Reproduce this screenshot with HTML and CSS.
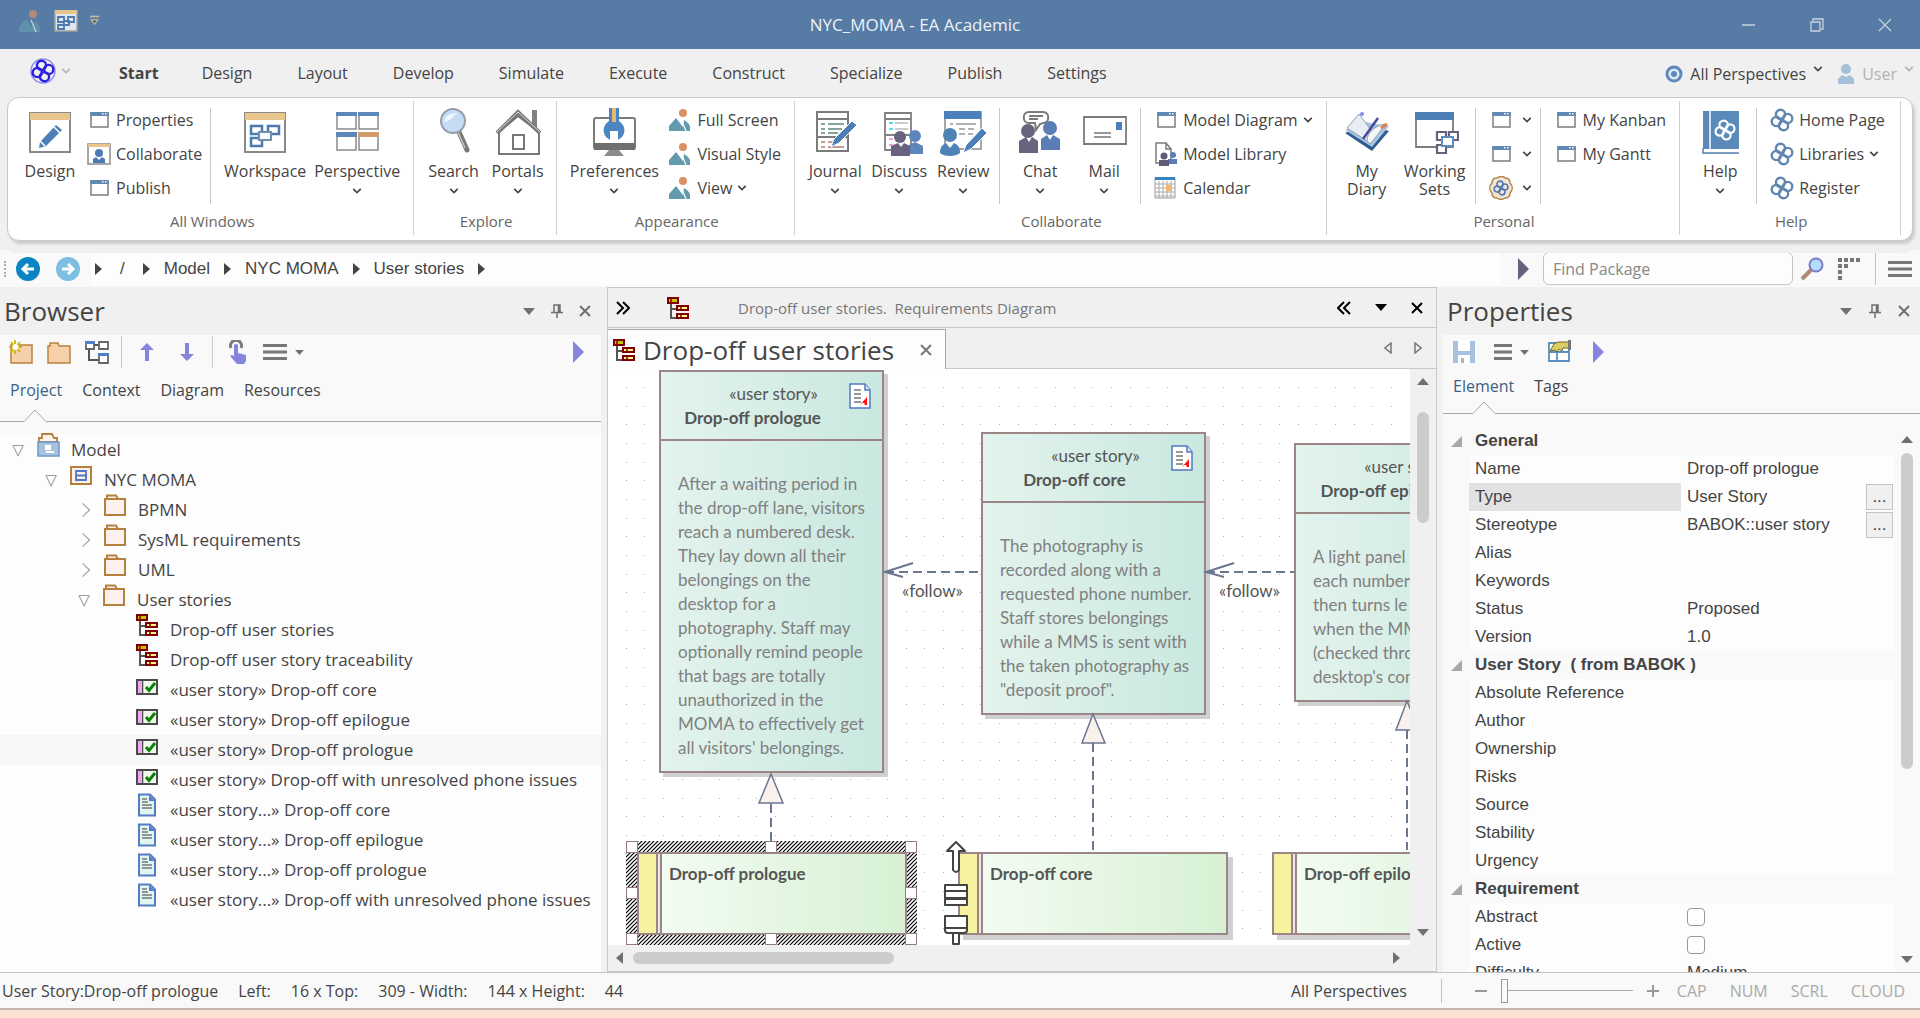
FILE: index.html
```
<!DOCTYPE html>
<html lang="en">
<head>
    <meta charset="UTF-8">
    <meta name="viewport" content="width=device-width, initial-scale=1.0">
    <title>NYC_MOMA - EA Academic</title>
    <link rel="stylesheet" href="styles.css">
</head>
<body>
    <!-- shared icons -->
    <svg class="sprite" aria-hidden="true">
        <symbol id="chev" viewBox="0 0 12 8"><path d="M1.500 1.500 6 6l4.500-4.500" fill="none" stroke="currentColor" stroke-width="2"/></symbol>
        <symbol id="caret" viewBox="0 0 14 8"><path d="M0 0h14L7 8z" fill="currentColor"/></symbol>
        <symbol id="tri" viewBox="0 0 7 12"><path d="M0 0l7 6-7 6z" fill="currentColor"/></symbol>
        <symbol id="pin" viewBox="0 0 12 14"><path d="M3 8V1h6v7M0 8.500h12M6 9v5M7.500 1v7" fill="none" stroke="currentColor" stroke-width="1.500"/></symbol>
        <symbol id="x" viewBox="0 0 12 12"><path d="M1 1l10 10M11 1 1 11" stroke="currentColor" stroke-width="2"/></symbol>
        <symbol id="burger" viewBox="0 0 24 16"><path d="M0 1.500h24M0 8h24M0 14.500h24" stroke="currentColor" stroke-width="3"/></symbol>
        <symbol id="win" viewBox="0 0 24 24"><path d="M4 5h17v14H4z" fill="#fff" stroke="#7d7d7d" stroke-width="1.500"/><path d="M3.300 4h18.400v4H3.300z" fill="#5f88b3"/><path d="M15 5h1.500v1.500H15zM18 5h1.500v1.500H18z" fill="#fff"/></symbol>
        <symbol id="landscape" viewBox="0 0 24 24"><circle cx="15" cy="5" r="4" fill="#d99062"/><path d="M1 23v-5l7-8 7 9 1-7c3 2 6 4 6 7v4z" fill="#639aae"/><path d="M13 11l5 12" stroke="#fff" stroke-width="1.200"/></symbol>
        <symbol id="knot" viewBox="0 0 24 24"><g fill="none" stroke="currentColor" stroke-width="2.400"><circle cx="10.500" cy="6.300" r="4.600"/><circle cx="17.700" cy="10.500" r="4.600"/><circle cx="13.500" cy="17.700" r="4.600"/><circle cx="6.300" cy="13.500" r="4.600"/></g></symbol>
        <symbol id="folder" viewBox="0 0 24 24"><path d="M2 22V6h2V2.500h9L15 6h7v16zM4 6h11" fill="#fdf1ed" stroke="#b5803c" stroke-width="2"/></symbol>
        <symbol id="diag" viewBox="0 0 24 24"><path d="M5 7v15h6M5 13h6" fill="none" stroke="#555" stroke-width="2"/><path d="M2 2h10v5H2z" fill="#c9c400" stroke="#7e0000" stroke-width="2"/><path d="M11 10h11v4H11zM11 18h11v4H11z" fill="#fdf485" stroke="#7e0000" stroke-width="2"/><path d="M5 3v3M15 10v4M15 18v4" stroke="#7e0000" stroke-width="1.500"/></symbol>
        <symbol id="req" viewBox="0 -3 24 24"><path d="M2 4h20v14H2z" fill="#effaea" stroke="#4a4a4a" stroke-width="2"/><path d="M3 5h3v12H3z" fill="#efa5f0"/><path d="M7.500 4v14" stroke="#4a4a4a" stroke-width="1.500"/><path d="M11 11l3 3.500L20 7" fill="none" stroke="#0a820a" stroke-width="3"/></symbol>
        <symbol id="doc" viewBox="0 0 24 24"><path d="M4 1.500h11l5 5v16H4z" fill="#dff5f0" stroke="#547bc4" stroke-width="2"/><path d="M14 2v6h6z" fill="#547bc4"/><path d="M7 6h5M7 9h6M7 12h10M7 15h10" stroke="#777" stroke-width="1.700"/></symbol>
        <symbol id="note" viewBox="0 0 22 26"><path d="M1 1h15l5 6v18H1z" fill="#fff" stroke="#5278c2" stroke-width="1.500"/><path d="M16 1v6h5" fill="#dce7fa" stroke="#5278c2" stroke-width="1.500"/><path d="M5 7h7M5 11h7M5 15h7M5 19h7" stroke="#777" stroke-width="1.500"/><path d="M11 22l7-8v8h-2.500v-2h-2z" fill="#f11"/></symbol>
    </svg>

    <header class="titlebar">
        <div class="quick">
            <svg class="i24 dim"><use href="#landscape"/></svg>
            <svg class="i24" viewBox="0 0 24 24"><path d="M1 2h22v20H1z" fill="#dfe6ee" stroke="#a4a4a4" stroke-width="1.500"/><path d="M1 1h22v4H1z" fill="#e5c58d"/><path d="M4 8h6v5H4zM14 8h6v5h-6zM4 16h6v4H4zM10 12h5v4h-5z" fill="#dfe6ee" stroke="#4c79b0" stroke-width="1.800"/></svg>
            <svg class="quick-more" viewBox="0 0 8 10"><path d="M0 1h8" stroke="#c9b89a" stroke-width="1.500"/><path d="M1 4h6L4 8z" fill="#555" stroke="#c9b89a"/></svg>
        </div>
        <h1>NYC_MOMA - EA Academic</h1>
        <div class="window-buttons">
            <button aria-label="Minimize"><svg class="i14" viewBox="0 0 14 14"><path d="M0 7h13" stroke="#c6d3e1" stroke-width="1.500"/></svg></button>
            <button aria-label="Restore"><svg class="i14" viewBox="0 0 14 14"><path d="M1 4h9v9H1zM3 3V1h10v10h-2" fill="none" stroke="#c6d3e1" stroke-width="1.300"/></svg></button>
            <button aria-label="Close"><svg class="i14" viewBox="0 0 14 14"><path d="M1 1l12 12M13 1 1 13" stroke="#c6d3e1" stroke-width="1.300"/></svg></button>
        </div>
    </header>

    <nav class="menu">
        <button class="app-button" aria-label="Application menu"><svg class="i28" viewBox="0 0 28 28"><circle cx="14" cy="14" r="12" fill="none" stroke="#8f8cf0" stroke-width="1.500"/><use href="#knot" x="2" y="2" width="24" height="24"/></svg><svg class="chev light"><use href="#chev"/></svg></button>
        <a href="#" class="active">Start</a>
        <a href="#" class="hover">Design</a>
        <a href="#">Layout</a>
        <a href="#">Develop</a>
        <a href="#">Simulate</a>
        <a href="#">Execute</a>
        <a href="#">Construct</a>
        <a href="#">Specialize</a>
        <a href="#">Publish</a>
        <a href="#">Settings</a>
        <div class="menu-right">
            <button><svg class="i18" viewBox="0 0 18 18"><circle cx="9" cy="9" r="7" fill="#dfe9f5" stroke="#5c88bd" stroke-width="3"/><circle cx="9" cy="9" r="3" fill="#5c88bd"/></svg>All Perspectives<svg class="chev up"><use href="#chev"/></svg></button>
            <button class="disabled"><svg class="i18" viewBox="0 0 18 20"><circle cx="9" cy="5" r="5" fill="#a5bfd9"/><path d="M1 20v-5l4-4 4 2 4-2 4 4v5z" fill="#a5bfd9"/></svg>User<svg class="chev up"><use href="#chev"/></svg></button>
        </div>
    </nav>

    <section class="ribbon">
        <div class="group">
            <div class="tools">
                <button class="big"><svg class="i48" viewBox="0 0 48 48"><path d="M4 5h40v39H4z" fill="#fff" stroke="#8a8a8a" stroke-width="2"/><path d="M4 5h40v7H4z" fill="#e8c68c"/><path d="M13 40l1-6L30 17l6 5-16 16z" fill="#4c7fb8"/><path d="M28 19l6 6M14 33l5 5" stroke="#fff" stroke-width="1.500"/></svg>Design</button>
                <div class="small">
                    <button><svg class="i24"><use href="#win"/></svg>Properties</button>
                    <button><svg class="i24" viewBox="0 0 24 24"><path d="M1 2h22v20H1z" fill="#fff" stroke="#8a8a8a" stroke-width="1.500"/><path d="M1 2h22v3H1z" fill="#e8c68c"/><circle cx="12" cy="11" r="4" fill="#4f79b4"/><path d="M6 21v-4l3-2 3 3 3-3 3 2v4z" fill="#4f79b4"/></svg>Collaborate</button>
                    <button><svg class="i24"><use href="#win"/></svg>Publish</button>
                </div>
                <i class="split"></i>
                <button class="big wide"><svg class="i48" viewBox="0 0 48 48"><path d="M4 5h40v39H4z" fill="#fff" stroke="#8a8a8a" stroke-width="2"/><path d="M4 5h40v7H4z" fill="#e8c68c"/><path d="M10 18h11v8H10zM27 18h11v8H27zM10 30h11v8H10z" fill="#fff" stroke="#4c79b0" stroke-width="2.500"/><path d="M18 24h12v8H18z" fill="#fff" stroke="#6e8fae" stroke-width="2"/></svg>Workspace</button>
                <button class="big wide"><svg class="i48" viewBox="0 0 48 48"><path d="M4 5h19v16H4zM26 5h19v16H26zM4 26h19v16H4zM26 26h19v16H26z" fill="#fff" stroke="#8a8a8a" stroke-width="1.500"/><path d="M3 4h21v4H3zM25 4h21v4H25zM3 24h21v5H3z" fill="#5a88b8"/><path d="M25 24h21v5H25z" fill="#d29a6d"/></svg>Perspective<svg class="chev"><use href="#chev"/></svg></button>
            </div>
            <h2>All Windows</h2>
        </div>
        <div class="group">
            <div class="tools">
                <button class="big"><svg class="i48" viewBox="0 0 48 48"><path d="M29 24l8 18" stroke="#777" stroke-width="5" stroke-linecap="round"/><path d="M28 24l7 16" stroke="#c5c5c5" stroke-width="1.500"/><ellipse cx="23" cy="13" rx="12" ry="12" fill="#c5dcf5" stroke="#969eaa" stroke-width="2"/><path d="M14 14c1-7 6-9 14-9-5 2-6 8-14 9z" fill="#eff6fd"/></svg>Search<svg class="chev"><use href="#chev"/></svg></button>
                <button class="big"><svg class="i48" viewBox="0 0 48 48"><path d="M5 24v22h40V24L24 8z" fill="#fff" stroke="#777" stroke-width="2"/><path d="M38 16V2h5v18z" fill="#808080"/><path d="M3 25 24 4l22 21" fill="none" stroke="#777" stroke-width="4"/><path d="M3 24 24 4l22 20" fill="none" stroke="#ddd" stroke-width="1"/><path d="M19 27h11v14H19z" fill="none" stroke="#777" stroke-width="2"/></svg>Portals<svg class="chev"><use href="#chev"/></svg></button>
            </div>
            <h2>Explore</h2>
        </div>
        <div class="group">
            <div class="tools">
                <button class="big wider"><svg class="i48" viewBox="0 0 48 48"><rect x="4" y="10" width="41" height="31" rx="2" fill="#fff" stroke="#7b7b7b" stroke-width="2"/><path d="M4 35h41v7H4z" fill="#6f6f6f"/><path d="M19 42h10l5 6H14z" fill="#8b8b8b"/><path d="M19 0h10v13c6 4 7 11 3 16l-4 3v-9h-8v9l-4-3c-4-5-3-12 3-16z" fill="#4a86c0"/><path d="M22 0h4v14h-4z" fill="#e7b86d"/></svg>Preferences<svg class="chev"><use href="#chev"/></svg></button>
                <div class="small">
                    <button><svg class="i24"><use href="#landscape"/></svg>Full Screen</button>
                    <button><svg class="i24"><use href="#landscape"/></svg>Visual Style</button>
                    <button><svg class="i24"><use href="#landscape"/></svg>View<svg class="chev"><use href="#chev"/></svg></button>
                </div>
            </div>
            <h2>Appearance</h2>
        </div>
        <div class="group">
            <div class="tools">
                <button class="big"><svg class="i48" viewBox="0 0 48 48"><path d="M6 4h31v39H6zM6 11h31M6 29h31" fill="#fff" stroke="#7b7b7b" stroke-width="2"/><path d="M10 16h4M17 16h16M10 21h4M17 21h14M10 25h4M17 25h10" stroke="#5f8a76" stroke-width="1.500"/><path d="M10 34h4M17 34h6M10 39h4M17 39h16" stroke="#b08070" stroke-width="1.500"/><path d="M20 39l3-8 18-18 5 4-18 18z" fill="#4c7fb8" stroke="#fff"/></svg>Journal<svg class="chev"><use href="#chev"/></svg></button>
                <button class="big"><svg class="i48" viewBox="0 0 48 48"><path d="M10 5h26v37H10zM10 11h26M10 27h26" fill="#fff" stroke="#808080" stroke-width="1.800"/><path d="M14 15h4M14 21h4" stroke="#27cfe8" stroke-width="1.500"/><path d="M20 15h13M20 21h13" stroke="#999"/><path d="M14 31h4M14 37h4" stroke="#ef7ed0" stroke-width="1.500"/><circle cx="40" cy="28" r="6" fill="#5d86bd"/><path d="M34 46V37l6-3 8 4v8z" fill="#5d86bd"/><circle cx="25" cy="29" r="6" fill="#67637e"/><path d="M16 48V38l7-3 3 4 3-4 6 3v10z" fill="#67637e"/></svg>Discuss<svg class="chev"><use href="#chev"/></svg></button>
                <button class="big"><svg class="i48" viewBox="0 0 48 48"><path d="M6 4h36v37H6z" fill="#fff" stroke="#8a8a8a" stroke-width="1.500"/><path d="M5 3h37v8H5z" fill="#4d81bb"/><path d="M11 16h3M17 16h20M20 21h6M29 21h6M20 26h6M29 26h5" stroke="#999" stroke-width="1.500"/><circle cx="11" cy="27" r="7" fill="#4f83b6"/><path d="M1 45c0-6 2-8 6-10l4 5 4-5c4 2 6 4 6 10-4 4-16 4-20 0z" fill="#4f83b6"/><path d="M24 45l3-8 16-17 5 5-16 16z" fill="#4c7fb8" stroke="#fff"/></svg>Review<svg class="chev"><use href="#chev"/></svg></button>
                <i class="split"></i>
                <button class="big"><svg class="i48" viewBox="0 0 48 48"><path d="M13 4h14c7 0 7 11 0 11l-3 1-4 6-1-7h-6c-7 0-7-11 0-11zM13 8h14M13 11h9" fill="#fff" stroke="#7b7b7b" stroke-width="2"/><circle cx="12" cy="23" r="7" fill="#68647d"/><path d="M3 45V33l7-4 3 5 3-5 6 4v12z" fill="#68647d"/><circle cx="34" cy="20" r="7" fill="#5b7db5"/><path d="M25 42V31l6-4 3 5 3-5 7 4v11z" fill="#5b7db5"/></svg>Chat<svg class="chev"><use href="#chev"/></svg></button>
                <button class="big"><svg class="i48" viewBox="0 0 48 48"><path d="M4 9h42v27H4z" fill="#fff" stroke="#7b7b7b" stroke-width="1.800"/><path d="M36 14h6v8h-6z" fill="#4d7ebc"/><path d="M14 25h17M14 29h17" stroke="#777" stroke-width="1.500"/></svg>Mail<svg class="chev"><use href="#chev"/></svg></button>
                <i class="split"></i>
                <div class="small">
                    <button><svg class="i24"><use href="#win"/></svg>Model Diagram<svg class="chev"><use href="#chev"/></svg></button>
                    <button><svg class="i24" viewBox="0 0 24 24"><path d="M2 1h10l5 6v14H2zM12 1v6h5" fill="#fff" stroke="#7b7b7b" stroke-width="1.500"/><circle cx="19" cy="13" r="3" fill="#5b7db5"/><path d="M14 22v-5h9v5z" fill="#5b7db5"/><circle cx="10" cy="14" r="3.500" fill="#5f5c78"/><path d="M5 24v-6h10v6z" fill="#5f5c78"/></svg>Model Library</button>
                    <button><svg class="i24" viewBox="0 0 24 24"><path d="M1 2h20v20H1z" fill="#fff" stroke="#9b9b9b"/><path d="M1 1h20v3H1z" fill="#3385c0"/><path d="M1 8h20M1 12h20M1 16h20M1 20h20M5 5v17M9 5v17M13 5v17M17 5v17" stroke="#aaa"/><path d="M12 9h6v6h-6z" fill="#f8b571"/></svg>Calendar</button>
                </div>
            </div>
            <h2>Collaborate</h2>
        </div>
        <div class="group">
            <div class="tools">
                <button class="big"><svg class="i48" viewBox="0 0 48 48"><path d="M2 25l20-8 24 6-17 20z" fill="#2d5c93"/><path d="M2 22l20-8 24 4-17 21z" fill="#a9c5dc"/><path d="M4 20l12-14 12 16-4 11z" fill="#e8edf3" stroke="#8da1b5"/><path d="M24 33c0-9 8-15 18-17-5 8-9 13-15 20z" fill="#f4f7fa" stroke="#8da1b5"/><path d="M20 31 35 10" stroke="#4b4799" stroke-width="2.500"/><path d="M38 20l6-4" stroke="#e37b43" stroke-width="3"/><circle cx="19" cy="6" r="2" fill="#7e8dee"/></svg>My<br>Diary</button>
                <button class="big sets"><svg class="i48" viewBox="0 0 48 48"><path d="M5 5h37v34H5z" fill="#fff" stroke="#7d7d7d" stroke-width="1.800"/><path d="M4 4h39v8H4z" fill="#4d7fb6"/><path d="M26 24h9v8h-9zM38 24h9v8h-9zM26 37h9v8h-9z" fill="#fff" stroke="#66627c" stroke-width="2.200"/><path d="M31 29h11v9H31z" fill="#fff" stroke="#5e8dbd" stroke-width="2"/></svg>Working<br>Sets</button>
                <i class="split"></i>
                <div class="small narrow">
                    <button aria-label="View list"><svg class="i24"><use href="#win"/></svg><svg class="chev"><use href="#chev"/></svg></button>
                    <button aria-label="Personal windows"><svg class="i24"><use href="#win"/></svg><svg class="chev"><use href="#chev"/></svg></button>
                    <button aria-label="Personal model"><svg class="i24" viewBox="0 0 24 24"><path d="M8 2c3-2 6-2 8 0 3 0 5 2 5 5 3 3 3 7 0 10 0 3-2 5-5 5-3 2-5 2-8 0-3 0-5-2-5-5-3-3-3-7 0-10 0-3 2-5 5-5z" fill="#f3e5d3" stroke="#b08550" stroke-width="1.500"/><g class="knot-blue"><use href="#knot" x="4" y="4" width="16" height="16"/></g></svg><svg class="chev"><use href="#chev"/></svg></button>
                </div>
                <i class="split"></i>
                <div class="small">
                    <button><svg class="i24"><use href="#win"/></svg>My Kanban</button>
                    <button><svg class="i24"><use href="#win"/></svg>My Gantt</button>
                </div>
            </div>
            <h2>Personal</h2>
        </div>
        <div class="group">
            <div class="tools">
                <button class="big"><svg class="i48" viewBox="0 0 48 48"><path d="M7 3h36v38H7z" fill="#5a8ab9"/><path d="M14 3v38" stroke="#fff" stroke-width="1.500"/><path d="M7 41h36v3H7z" fill="#fff"/><path d="M7 40v5h36" fill="none" stroke="#4f80b0" stroke-width="1.500"/><g class="knot-white"><use href="#knot" x="18" y="11" width="22" height="22"/></g></svg>Help<svg class="chev"><use href="#chev"/></svg></button>
                <i class="split"></i>
                <div class="small sites">
                    <button><svg class="i24"><use href="#knot"/></svg>Home Page</button>
                    <button><svg class="i24"><use href="#knot"/></svg>Libraries<svg class="chev"><use href="#chev"/></svg></button>
                    <button><svg class="i24"><use href="#knot"/></svg>Register</button>
                </div>
            </div>
            <h2>Help</h2>
        </div>
    </section>

    <nav class="crumbs">
        <button aria-label="Back"><svg class="i26" viewBox="0 0 26 26"><circle cx="13" cy="13" r="12" fill="#0a84c4"/><path d="M19 13H8M13 8l-5 5 5 5" fill="none" stroke="#fff" stroke-width="3"/></svg></button>
        <button aria-label="Forward"><svg class="i26" viewBox="0 0 26 26"><circle cx="13" cy="13" r="12" fill="#7dbfe1"/><path d="M7 13h11M13 8l5 5-5 5" fill="none" stroke="#fff" stroke-width="3"/></svg></button>
        <div class="path">
            <svg class="tri"><use href="#tri"/></svg>
            <a href="#" class="root">/</a>
            <svg class="tri"><use href="#tri"/></svg>
            <a href="#">Model</a>
            <svg class="tri"><use href="#tri"/></svg>
            <a href="#">NYC MOMA</a>
            <svg class="tri"><use href="#tri"/></svg>
            <a href="#">User stories</a>
            <svg class="tri"><use href="#tri"/></svg>
        </div>
        <svg class="go" viewBox="0 0 11 22"><path d="M0 0l11 11L0 22z" fill="#64627c"/></svg>
        <input type="text" placeholder="Find Package" aria-label="Find Package">
        <button aria-label="Find"><svg class="i24" viewBox="0 0 24 24"><path d="M2 22l9-9" stroke="#b08a78" stroke-width="4"/><circle cx="16" cy="8" r="6.500" fill="#b6dcfa" stroke="#7b7bc4" stroke-width="2"/></svg></button>
        <button aria-label="Layout"><svg class="i24" viewBox="0 0 24 24"><path d="M0 3h24M0 9h12M0 15h6M0 21h6" stroke="#777" stroke-width="4" stroke-dasharray="4 2"/></svg></button>
        <button class="ruled" aria-label="Menu"><svg class="burger"><use href="#burger"/></svg></button>
    </nav>

    <main class="work">
        <section class="panel">
            <header class="panel-head">
                <h2>Browser</h2>
                <svg class="caret"><use href="#caret"/></svg>
                <svg class="i14"><use href="#pin"/></svg>
                <svg class="i12"><use href="#x"/></svg>
            </header>
            <div class="toolbar">
                <button aria-label="New package"><svg class="i24" viewBox="0 0 24 24"><path d="M2 5h21v18H2z" fill="#f6d0aa" stroke="#b8833f" stroke-width="1.500"/><path d="M6 0v14M0 7h13M2 2l9 10M11 2 2 12" stroke="#c8b900" stroke-width="1.800"/><circle cx="6.500" cy="7" r="3" fill="#fff"/></svg></button>
                <button aria-label="Open package"><svg class="i24" viewBox="0 0 24 24"><path d="M1 23V6h2V3h8l1 3h11v17z" fill="#f6d0aa" stroke="#b8833f" stroke-width="1.500"/></svg></button>
                <button aria-label="New diagram"><svg class="i24" viewBox="0 0 24 24"><path d="M4 6v14h12M8 5h8" fill="none" stroke="#555" stroke-width="2"/><path d="M1 2h8v7H1zM14 2h9v7h-9zM14 14h9v9h-9z" fill="#fff" stroke="#666" stroke-width="1.800"/><path d="M0 1h10v3H0zM13 13h11v3H13z" fill="#4f7fc5"/></svg></button>
                <i class="split"></i>
                <button aria-label="Move up"><svg class="arrow" viewBox="0 0 14 18"><path d="M7 0l7 7H9v11H5V7H0z" fill="#8585dc"/></svg></button>
                <button aria-label="Move down"><svg class="arrow" viewBox="0 0 14 18"><path d="M7 18l7-7H9V0H5v11H0z" fill="#8585dc"/></svg></button>
                <i class="split"></i>
                <button aria-label="Locate"><svg class="i24" viewBox="0 0 24 24"><path d="M6 8a5.500 5.500 0 1 1 10 0" fill="none" stroke="#7b7b7b" stroke-width="3"/><path d="M9 5q2-2 4 0v8l8 2v6l-2 3h-7l-7-8 2-1 2 1z" fill="#8585dc"/></svg></button>
                <button class="menu-button" aria-label="Options"><svg class="burger"><use href="#burger"/></svg><svg class="caret small-caret"><use href="#caret"/></svg></button>
                <svg class="play" viewBox="0 0 11 22"><path d="M0 0l11 11L0 22z" fill="#8585dc"/></svg>
            </div>
            <nav class="tabs">
                <a href="#" class="active">Project</a>
                <a href="#">Context</a>
                <a href="#">Diagram</a>
                <a href="#">Resources</a>
            </nav>
            <div class="notch"><svg viewBox="0 0 22 13"><path d="M0 12.500 11 1l11 11.500" fill="none" stroke="#a8a8a8"/></svg></div>
            <ul class="tree">
                <li class="open"><svg class="i24" viewBox="0 0 24 24"><path d="M3 9V5h3V1h10l2 4h3v4z" fill="#fdf1ed" stroke="#b5803c" stroke-width="1.800"/><path d="M2 9h21v14H2z" fill="#a8c2de" stroke="#6f98c8" stroke-width="1.500"/><path d="M9 12h6v5H9zM10 18h8v2h-8z" fill="#fff"/></svg>Model</li>
                <li class="open l1"><svg class="i24" viewBox="0 0 24 24"><path d="M2 4h20v17H2z" fill="#fdf1ed" stroke="#b5803c" stroke-width="2"/><path d="M7 8h10v9H7zM7 12.500h11" fill="none" stroke="#4f78c8" stroke-width="1.800"/></svg>NYC MOMA</li>
                <li class="shut l2"><svg class="i24"><use href="#folder"/></svg>BPMN</li>
                <li class="shut l2"><svg class="i24"><use href="#folder"/></svg>SysML requirements</li>
                <li class="shut l2"><svg class="i24"><use href="#folder"/></svg>UML</li>
                <li class="open l2"><svg class="i24"><use href="#folder"/></svg>User stories</li>
                <li class="l3"><svg class="i24"><use href="#diag"/></svg>Drop-off user stories</li>
                <li class="l3"><svg class="i24"><use href="#diag"/></svg>Drop-off user story traceability</li>
                <li class="l3"><svg class="i24"><use href="#req"/></svg>«user story» Drop-off core</li>
                <li class="l3"><svg class="i24"><use href="#req"/></svg>«user story» Drop-off epilogue</li>
                <li class="l3 selected"><svg class="i24"><use href="#req"/></svg>«user story» Drop-off prologue</li>
                <li class="l3"><svg class="i24"><use href="#req"/></svg>«user story» Drop-off with unresolved phone issues</li>
                <li class="l3"><svg class="i24"><use href="#doc"/></svg>«user story...» Drop-off core</li>
                <li class="l3"><svg class="i24"><use href="#doc"/></svg>«user story...» Drop-off epilogue</li>
                <li class="l3"><svg class="i24"><use href="#doc"/></svg>«user story...» Drop-off prologue</li>
                <li class="l3"><svg class="i24"><use href="#doc"/></svg>«user story...» Drop-off with unresolved phone issues</li>
            </ul>
        </section>

        <section class="diagram">
            <header class="diagram-head">
                <button aria-label="Expand"><svg class="i14" viewBox="0 0 14 14"><path d="M1 1l6 6-6 6M7 1l6 6-6 6" fill="none" stroke="#000" stroke-width="2"/></svg></button>
                <svg class="i24"><use href="#diag"/></svg>
                <p>Drop-off user stories. &nbsp;Requirements Diagram</p>
                <button aria-label="Collapse"><svg class="i14" viewBox="0 0 14 14"><path d="M7 1 1 7l6 6M13 1 7 7l6 6" fill="none" stroke="#000" stroke-width="2"/></svg></button>
                <button aria-label="Windows"><svg class="caret"><use href="#caret"/></svg></button>
                <button aria-label="Close diagram"><svg class="i12"><use href="#x"/></svg></button>
            </header>
            <div class="diagram-tabs">
                <div class="diagram-tab"><svg class="i24"><use href="#diag"/></svg><h2>Drop-off user stories</h2><svg class="i12"><use href="#x"/></svg></div>
                <svg class="step" viewBox="0 0 8 12"><path d="M7 1v10L1 6z" fill="none" stroke="#777" stroke-width="1.500"/></svg>
                <svg class="step" viewBox="0 0 8 12"><path d="M1 1v10l6-5z" fill="none" stroke="#777" stroke-width="1.500"/></svg>
            </div>
            <div class="stage">
                <div class="canvas">
                    <svg class="layer" aria-hidden="true">
                        <defs>
                            <pattern id="dots" x="18" y="18" width="56" height="56" patternUnits="userSpaceOnUse">
                                <path d="M0 0h1v1H0zM18 0h1v1h-1zM37 0h1v1h-1zM0 19h1v1H0zM18 19h1v1h-1zM37 19h1v1h-1zM0 37h1v1H0zM18 37h1v1h-1zM37 37h1v1h-1z" fill="#b0b0b0"/>
                            </pattern>
                        </defs>
                        <rect width="100%" height="100%" fill="url(#dots)"/>
                    </svg>
                    <span class="link-label n-follow1">«follow»</span>
                    <span class="link-label n-follow2">«follow»</span>

                    <article class="story n-prologue">
                        <header><span>«user story»</span><b>Drop-off prologue</b><svg class="note"><use href="#note"/></svg></header>
                        <p>After a waiting period in<br>the drop-off lane, visitors<br>reach a numbered desk.<br>They lay down all their<br>belongings on the<br>desktop for a<br>photography. Staff may<br>optionally remind people<br>that bags are totally<br>unauthorized in the<br>MOMA to effectively get<br>all visitors' belongings.</p>
                    </article>
                    <article class="story n-core">
                        <header><span>«user story»</span><b>Drop-off core</b><svg class="note"><use href="#note"/></svg></header>
                        <p>The photography is<br>recorded along with a<br>requested phone number.<br>Staff stores belongings<br>while a MMS is sent with<br>the taken photography as<br>"deposit proof".</p>
                    </article>
                    <article class="story n-epilogue">
                        <header><span>«user story»</span><b>Drop-off epilogue</b></header>
                        <p>A light panel<br>each number<br>then turns le<br>when the MM<br>(checked thro<br>desktop's com</p>
                    </article>

                    <!-- connectors, over the box shadows -->
                    <svg class="layer" aria-hidden="true">
                        <g fill="none" stroke="#6b7690" stroke-width="2">
                            <path d="M277 203h95M598 203h88" stroke-dasharray="9 5"/>
                            <path d="M305 194l-28 9 18 5M626 194l-28 9 18 5"/>
                            <path d="M163 435v37M485 374v108M799 361v120" stroke-dasharray="9 5"/>
                        </g>
                        <path d="M163 405l12 29h-24zM485 345l12 29h-23zM799 332l12 29h-23z" fill="#faf0ec" stroke="#6b7690" stroke-width="1.500"/>
                    </svg>

                    <svg class="hatch" viewBox="0 0 291 104" aria-hidden="true">
                        <defs><pattern id="stripe" width="4" height="4" patternUnits="userSpaceOnUse"><path d="M-1 1l2-2M0 4l4-4M3 5l2-2" stroke="#000" stroke-width="1.200"/></pattern></defs>
                        <rect width="291" height="104" fill="#fff"/><rect width="291" height="104" fill="url(#stripe)"/>
                    </svg>
                    <div class="item n-item1"><b>Drop-off prologue</b></div>
                    <svg class="hatch" viewBox="0 0 291 104" aria-hidden="true">
                        <path d="M.5.5h11v11H.5zM139.500.5h11v11h-11zM279.500.5h11v11h-11zM.5 46.500h11v11H.5zM279.500 46.500h11v11h-11zM.5 92.500h11v11H.5zM139.500 92.500h11v11h-11zM279.500 92.500h11v11h-11z" fill="#fff" stroke="#957b7b"/>
                    </svg>
                    <div class="item shaded n-item2"><b>Drop-off core</b></div>
                    <div class="item shaded n-item3"><b>Drop-off epilogue</b></div>
                    <svg class="quicklink" viewBox="0 0 24 104" aria-hidden="true">
                        <g fill="#fff" stroke="#444" stroke-width="2" stroke-linejoin="round"><path d="M12 1l9 9h-6v19q-3 4-6 0V10H3zM1 44h22v6H1zM1 50h22v7H1zM1 58h22v6H1zM9 92h6v11H9zM1 75h22v14q0 3-3 3H4q-3 0-3-3z"/><path d="M1 87h22"/></g>
                    </svg>
                </div>
                <div class="vscroll"><svg class="caret flip"><use href="#caret"/></svg><i></i><svg class="caret"><use href="#caret"/></svg></div>
                <div class="hscroll"><svg class="tri flip"><use href="#tri"/></svg><i></i><svg class="tri"><use href="#tri"/></svg></div>
            </div>
        </section>

        <section class="panel props">
            <header class="panel-head">
                <h2>Properties</h2>
                <svg class="caret"><use href="#caret"/></svg>
                <svg class="i14"><use href="#pin"/></svg>
                <svg class="i12"><use href="#x"/></svg>
            </header>
            <div class="toolbar">
                <button aria-label="Save"><svg class="i24" viewBox="0 0 24 24"><path d="M1 1h22v22H1z" fill="#a9c1dd"/><path d="M6 1h12v10H6zM6 15h12v8H6z" fill="#fff"/><path d="M9 18h3v5H9z" fill="#b5b5b5"/></svg></button>
                <button class="menu-button" aria-label="Options"><svg class="burger short" viewBox="0 0 18 16"><path d="M0 1.500h18M0 8h18M0 14.500h18" stroke="#777" stroke-width="3"/></svg><svg class="caret small-caret"><use href="#caret"/></svg></button>
                <button aria-label="Edit"><svg class="i24" viewBox="0 0 24 24"><path d="M2 3h20v18H2zM10 3v18M2 12h20" fill="#fff" stroke="#5a8ebf" stroke-width="1.800"/><path d="M3 11l4-7 4-2h11v6h-6l-1 3-3-2-2 3-2-2z" fill="#d9cf62" stroke="#6f6a28"/><path d="M21 0h3v10h-3z" fill="#777"/></svg></button>
                <svg class="play inline" viewBox="0 0 11 22"><path d="M0 0l11 11L0 22z" fill="#8585dc"/></svg>
            </div>
            <nav class="tabs">
                <a href="#" class="active">Element</a>
                <a href="#">Tags</a>
            </nav>
            <div class="notch"><svg viewBox="0 0 22 13"><path d="M0 12.500 11 1l11 11.500" fill="none" stroke="#a8a8a8"/></svg></div>
            <div class="list">
                <div class="rows">
                    <table>
                        <colgroup><col class="c-mark"><col class="c-name"><col><col class="c-more"></colgroup>
                        <tbody>
                            <tr class="section"><td><svg class="mark" viewBox="0 0 11 11"><path d="M11 0v11H0z" fill="#a8a8a8"/></svg></td><th colspan="3">General</th></tr>
                            <tr><td></td><td>Name</td><td>Drop-off prologue</td><td></td></tr>
                            <tr class="current"><td></td><td>Type</td><td>User Story</td><td><button aria-label="Choose type">...</button></td></tr>
                            <tr><td></td><td>Stereotype</td><td>BABOK::user story</td><td><button aria-label="Choose stereotype">...</button></td></tr>
                            <tr><td></td><td>Alias</td><td></td><td></td></tr>
                            <tr><td></td><td>Keywords</td><td></td><td></td></tr>
                            <tr><td></td><td>Status</td><td>Proposed</td><td></td></tr>
                            <tr><td></td><td>Version</td><td>1.0</td><td></td></tr>
                            <tr class="section"><td><svg class="mark" viewBox="0 0 11 11"><path d="M11 0v11H0z" fill="#a8a8a8"/></svg></td><th colspan="3">User Story &nbsp;( from BABOK )</th></tr>
                            <tr><td></td><td>Absolute Reference</td><td></td><td></td></tr>
                            <tr><td></td><td>Author</td><td></td><td></td></tr>
                            <tr><td></td><td>Ownership</td><td></td><td></td></tr>
                            <tr><td></td><td>Risks</td><td></td><td></td></tr>
                            <tr><td></td><td>Source</td><td></td><td></td></tr>
                            <tr><td></td><td>Stability</td><td></td><td></td></tr>
                            <tr><td></td><td>Urgency</td><td></td><td></td></tr>
                            <tr class="section"><td><svg class="mark" viewBox="0 0 11 11"><path d="M11 0v11H0z" fill="#a8a8a8"/></svg></td><th colspan="3">Requirement</th></tr>
                            <tr><td></td><td><label for="abstract">Abstract</label></td><td><input type="checkbox" id="abstract"></td><td></td></tr>
                            <tr><td></td><td><label for="active">Active</label></td><td><input type="checkbox" id="active"></td><td></td></tr>
                            <tr><td></td><td>Difficulty</td><td>Medium</td><td></td></tr>
                        </tbody>
                    </table>
                </div>
                <div class="vscroll long"><svg class="caret flip"><use href="#caret"/></svg><i></i><svg class="caret"><use href="#caret"/></svg></div>
            </div>
        </section>
    </main>

    <footer class="status">
        <div class="coords"><span>User Story:Drop-off prologue</span><span>Left:</span><span>16 x Top:</span><span>309 - Width:</span><span>144 x Height:</span><span>44</span></div>
        <span class="scope">All Perspectives</span>
        <div class="zoom">
            <button aria-label="Zoom out"><svg class="i12" viewBox="0 0 12 12"><path d="M0 6h12" stroke="#999" stroke-width="2"/></svg></button>
            <input type="range" min="0" max="100" value="0" aria-label="Zoom">
            <button aria-label="Zoom in"><svg class="i12" viewBox="0 0 12 12"><path d="M0 6h12M6 0v12" stroke="#999" stroke-width="2"/></svg></button>
        </div>
        <div class="keys"><span>CAP</span><span>NUM</span><span>SCRL</span><span>CLOUD</span></div>
    </footer>
</body>
</html>
```
FILE: styles.css
```
* {
    box-sizing: border-box;
}

body {
    font-family: "Open Sans", "Noto Sans", sans-serif;
    font-size: 16px;
    color: #444;
    background-color: #fbe2d2;
    display: flex;
    flex-direction: column;
    height: 100vh;
    margin: 0;
    padding-bottom: 8px;
    overflow: hidden;
    white-space: nowrap;
}

h1, h2, p, ul {
    margin: 0;
    padding: 0;
    font-weight: normal;
}

a {
    color: inherit;
    text-decoration: none;
}

button {
    display: flex;
    align-items: center;
    background: none;
    border: none;
    padding: 0;
    color: inherit;
    font: inherit;
    cursor: pointer;
}

svg {
    flex: none;
}

.sprite {
    position: absolute;
    width: 0;
    height: 0;
}

.i12 { width: 12px; height: 12px; }
.i14 { width: 14px; height: 14px; }
.i18 { width: 18px; height: 20px; }
.i24 { width: 24px; height: 24px; }
.i26 { width: 26px; height: 26px; }
.i28 { width: 28px; height: 28px; }
.i48 { width: 48px; height: 48px; }

.chev {
    width: 10px;
    height: 8px;
}

.caret {
    width: 12px;
    height: 7px;
    color: #707070;
}

.small-caret {
    width: 9px;
    height: 5px;
}

.tri {
    width: 7px;
    height: 12px;
}

.burger {
    width: 24px;
    height: 16px;
    color: #777;
}

.flip {
    transform: rotate(180deg);
}

.dim {
    opacity: 0.7;
}

/* title bar */
.titlebar {
    display: grid;
    grid-template-columns: 9fr auto 10fr;
    align-items: center;
    height: 49px;
    flex: none;
    background-color: #567ca5;
    color: #eef2f7;
}

.titlebar h1 {
    font-size: 17px;
}

.quick {
    display: flex;
    align-items: center;
    gap: 12px;
    padding: 0 0 8px 18px;
}

.quick-more {
    width: 9px;
    height: 12px;
}

.window-buttons {
    display: flex;
    justify-content: flex-end;
    gap: 54px;
    padding-right: 28px;
}

/* menu */
.menu {
    display: flex;
    align-items: flex-start;
    height: 48px;
    flex: none;
    padding-left: 29px;
    gap: 35px;
    background-color: #f0f0f0;
}

.menu a {
    height: 44px;
    line-height: 48px;
    padding: 0 5px;
}

.menu a.active {
    font-weight: bold;
    margin-right: -2px;
    border-bottom: 3px solid #3d5f80;
}

.menu a.hover {
    border-bottom: 3px solid #a8a8a8;
}

.app-button {
    gap: 4px;
    height: 44px;
    margin-right: 8px;
    color: #2a22e0;
}

.light {
    color: #b5b5b5;
}

.menu-right {
    display: flex;
    gap: 14px;
    height: 50px;
    margin-left: auto;
    padding-right: 6px;
}

.menu-right button {
    gap: 7px;
}

.menu-right .up {
    margin-bottom: 10px;
}

.disabled {
    color: #b3b3b3;
}

/* ribbon */
.ribbon {
    display: grid;
    grid-template-columns: 406fr 144fr 238fr 532fr 354fr 221fr 11fr;
    flex: none;
    height: 144px;
    padding: 3px 0 5px;
    background-color: #fff;
    border: 1px solid #c9c9c9;
    border-radius: 12px;
    box-shadow: 2px 3px 3px #c9cccb, 0 0 0 12px #f0f0f0;
    margin: 0 7px;
    z-index: 1;
}

.group {
    display: flex;
    flex-direction: column;
    padding: 7px 0 0 8px;
    border-right: 1px solid #cfcfcf;
    min-width: 0;
}

.group:first-child {
    padding-left: 10px;
}

.tools {
    display: flex;
    height: 96px;
}

.group h2 {
    font-size: 15px;
    line-height: 20px;
    margin-top: 7px;
    padding-right: 6px;
    text-align: center;
    color: #666;
}

.big {
    flex: none;
    flex-direction: column;
    width: 64px;
    line-height: 18px;
}

.big .i48 {
    margin-bottom: 6px;
}

.big .chev {
    margin-top: 7px;
}

.sets {
    width: 72px;
}

.wide {
    width: 92px;
}

.wider {
    width: 98px;
}

.small {
    display: flex;
    flex: none;
    flex-direction: column;
}

.small button {
    flex: none;
    height: 34px;
    padding-bottom: 11px;
    gap: 5px;
    margin-left: 5px;
}

.small.narrow button {
    gap: 9px;
}

.sites .i24 {
    color: #6085b0;
}

.knot-blue {
    color: #4f78b5;
}

.knot-white {
    color: #fff;
}

.split {
    flex: none;
    width: 1px;
    background-color: #c8c8c8;
    margin: 0 8px 0 4px;
}

.small + .split {
    margin-left: 8px;
}

/* breadcrumbs */
.crumbs {
    display: flex;
    align-items: center;
    flex: none;
    height: 37px;
    margin-top: 9px;
    padding: 2px 8px 2px 4px;
    gap: 14px;
    background-color: #f9f9f9;
    box-shadow: 0 -9px 0 #f0f0f0;
    font-family: "Liberation Sans", sans-serif;
    font-size: 17px;
}

.crumbs::before {
    content: "";
    height: 16px;
    margin-right: -5px;
    border-left: 2px dotted #aaa;
}

.path {
    display: flex;
    align-items: center;
    gap: 14px;
    flex: 1;
    align-self: stretch;
    padding-left: 4px;
    margin-left: -4px;
    background-color: #fdfdfd;
}

.root {
    padding: 0 4px;
}

.go {
    width: 11px;
    height: 22px;
    margin-left: 4px;
}

.crumbs input {
    width: 250px;
    height: 33px;
    padding: 0 9px;
    border: 1px solid #c4c4c4;
    border-radius: 6px;
    background-color: #fdfdfd;
    font: 16px "Open Sans", sans-serif;
}

.crumbs input::placeholder {
    color: #888;
}

.crumbs input + button {
    margin-left: -7px;
}

.crumbs .ruled {
    height: 32px;
    padding-left: 12px;
    border-left: 1px solid #c4c4c4;
    margin-left: -1px;
}

/* work area */
.work {
    display: grid;
    grid-template-columns: 601px minmax(0, 1fr) 477px;
    gap: 6px;
    flex: 1;
    min-height: 0;
    background-color: #f1f1f1;
}

.panel {
    display: flex;
    flex-direction: column;
    min-height: 0;
    background-color: #f9f9f9;
}

.panel-head {
    display: flex;
    align-items: center;
    flex: none;
    gap: 15px;
    height: 48px;
    padding: 0 10px 0 4px;
    background-color: #f0f0f0;
    color: #707070;
}

.panel-head h2 {
    flex: 1;
    color: #444;
    font-size: 26px;
}

.toolbar {
    display: flex;
    align-items: center;
    gap: 14px;
    height: 34px;
    padding: 0 17px 0 9px;
}

.toolbar .split {
    height: 32px;
    margin: 0 -2px;
}

.toolbar .arrow {
    width: 14px;
    height: 18px;
    margin: 0 6px;
}

.menu-button {
    gap: 8px;
}

.short {
    width: 18px;
}

.play {
    width: 11px;
    height: 22px;
    margin-left: auto;
}

.play.inline {
    margin-left: 4px;
}

.tabs {
    display: flex;
    gap: 20px;
    height: 40px;
    line-height: 42px;
    padding: 0 10px;
}

.tabs .active {
    color: #3d6185;
}

.notch {
    display: flex;
    height: 13px;
}

.notch::before, .notch::after {
    content: "";
    width: 24px;
    border-bottom: 1px solid #a8a8a8;
}

.notch::after {
    flex: 1;
}

.notch svg {
    width: 22px;
    height: 13px;
}

/* project tree */
.tree {
    flex: 1;
    margin-top: 13px;
    list-style: none;
    background-color: #fdfdfd;
    font-size: 17px;
}

.tree li {
    display: flex;
    align-items: center;
    height: 30px;
    line-height: 32px;
    padding-left: 10px;
}

.tree li::before {
    content: "";
    width: 16px;
    margin-right: 10px;
    line-height: 34px;
    text-align: center;
    font-family: "DejaVu Sans", sans-serif;
    font-size: 15px;
    color: #888;
}

.tree .open::before {
    content: "▽";
}

.tree .shut::before {
    content: "";
    width: 9px;
    height: 9px;
    margin: 0 15px 0 2px;
    border: solid #999;
    border-width: 1px 1px 0 0;
    transform: rotate(45deg);
}

.tree .i24 {
    margin: 0 11px 10px 0;
}

.tree .l1 { padding-left: 43px; }
.tree .l2 { padding-left: 76px; }
.tree .l3 { padding-left: 109px; }

.tree .selected {
    background-color: #f7f7f7;
}

/* diagram */
.diagram {
    display: flex;
    flex-direction: column;
    min-height: 0;
    border: 1px solid #c8c8c8;
    background-color: #f0f0f0;
}

.diagram-head {
    display: flex;
    align-items: center;
    height: 40px;
    flex: none;
    padding: 0 13px 0 8px;
    border-bottom: 1px solid #c8c8c8;
    gap: 24px;
    color: #000;
}

.diagram-head .caret {
    color: #000;
}

.diagram-head .i24 {
    margin-left: 12px;
}

.diagram-head p {
    flex: 1;
    padding-left: 24px;
    color: #777;
    font-size: 15px;
}

.diagram-tabs {
    display: flex;
    align-items: center;
    flex: none;
    height: 41px;
    gap: 22px;
    padding-right: 14px;
    border-bottom: 1px solid #c8c8c8;
}

.diagram-tab {
    display: flex;
    align-items: center;
    align-self: stretch;
    gap: 7px;
    width: 338px;
    margin: 1px auto -1px 0;
    padding: 0 13px 0 4px;
    background-color: #fdfdfd;
    border: 1px solid #a8a8a8;
    border-width: 1px 1px 0 0;
    color: #777;
}

.diagram-tab h2 {
    flex: 1;
    color: #444;
    font-size: 26px;
}

.step {
    width: 8px;
    height: 12px;
}

.stage {
    display: grid;
    grid-template-columns: minmax(0, 1fr) 26px;
    grid-template-rows: minmax(0, 1fr) 26px;
    flex: 1;
    min-height: 0;
}

.canvas {
    position: relative;
    overflow: hidden;
    background-color: #fff;
    font-family: Lato, sans-serif;
    font-size: 17px;
}

.layer {
    position: absolute;
    left: 0;
    top: 0;
    width: 100%;
    height: 100%;
}

.vscroll, .hscroll {
    display: flex;
    flex: none;
    align-items: center;
    padding: 9px 0;
    flex-direction: column;
}

.hscroll {
    flex-direction: row;
    padding: 0 10px 0 8px;
    color: #707070;
}

.vscroll i {
    width: 12px;
    height: 111px;
    margin: 27px 0 auto;
    border-radius: 6px;
    background-color: #ccc;
}

.hscroll i {
    width: 261px;
    height: 12px;
    margin: 0 auto 0 10px;
    border-radius: 6px;
    background-color: #ccc;
}

.link-label, .story, .item, .hatch, .quicklink {
    position: absolute;
}

.link-label {
    color: #555;
}

.n-follow1 { left: 294px; top: 211px; }
.n-follow2 { left: 611px; top: 211px; }

.story {
    width: 225px;
    border: 2px solid #9b8585;
    background: linear-gradient(to right, #e3f3ed, #c9e8df);
    box-shadow: 4px 4px 0 #d0d0d0;
    color: #808080;
}

.story header {
    display: flex;
    flex-direction: column;
    height: 69px;
    padding: 10px 38px 0 0;
    border-bottom: 2px solid #9b8585;
    line-height: 24px;
    text-align: center;
    color: #555;
}

.story span {
    padding-left: 42px;
}

.story .note {
    position: absolute;
    right: 11px;
    top: 11px;
    width: 22px;
    height: 26px;
}

.story p {
    padding: 31px 0 11px 17px;
    line-height: 24px;
}

.n-prologue { left: 51px; top: 1px; }
.n-core { left: 373px; top: 63px; }
.n-epilogue { left: 686px; top: 74px; }

.item {
    width: 270px;
    height: 83px;
    padding: 9px 30px;
    border: 2px solid #9b8585;
    background: linear-gradient(to right, #f6f2a0 17px, #9b8585 17px, #9b8585 19px, #ece8e8 19px, #ece8e8 21px, #9b8585 21px, #9b8585 23px, #f2fcf2 23px, #d7f1d3);
    color: #555;
}

.item.shaded {
    box-shadow: 5px 5px 0 #d0d0d0;
}

.n-item1 { left: 29px; top: 483px; }
.n-item2 { left: 350px; top: 483px; }
.n-item3 { left: 664px; top: 483px; }

.hatch {
    left: 18px;
    top: 472px;
    width: 291px;
    height: 104px;
}

.quicklink {
    left: 336px;
    top: 472px;
    width: 24px;
    height: 104px;
}

/* properties */
.props .panel-head {
    gap: 16px;
}

.props .toolbar {
    gap: 18px;
}

.props .tabs {
    height: 32px;
    line-height: 34px;
}

.props .notch::before {
    width: 30px;
}

.list {
    display: flex;
    flex: 1;
    min-height: 0;
    margin-top: 13px;
}

.rows {
    flex: 1;
    overflow: hidden;
}

table {
    width: 100%;
    table-layout: fixed;
    border-collapse: collapse;
    font-family: "Liberation Sans", sans-serif;
    font-size: 17px;
}

.c-mark { width: 26px; }
.c-name { width: 212px; }
.c-more { width: 28px; }

td, th {
    height: 28px;
    padding: 0 0 0 6px;
    text-align: left;
    background-color: #fdfdfd;
}

td:first-child, .section td, .section th {
    background-color: #f9f9f9;
}

td:first-child {
    padding-left: 8px;
}

td:last-child {
    padding: 0;
}

.mark {
    display: block;
    width: 11px;
    height: 11px;
}

.current td:nth-child(2) {
    background-color: #e2e2e2;
}

td button {
    justify-content: center;
    width: 27px;
    height: 26px;
    border: 1px solid #c4c4c4;
    background-color: #f0f0f0;
}

td input {
    display: block;
    appearance: none;
    width: 18px;
    height: 18px;
    margin: 0;
    border: 1px solid #999;
    border-radius: 4px;
    background-color: #fff;
}

.vscroll.long {
    width: 26px;
}

.long i {
    height: 316px;
    margin-top: 10px;
}

/* status bar */
.status {
    display: flex;
    align-items: center;
    flex: none;
    height: 38px;
    padding: 0 15px 0 2px;
    background-color: #f9f9f9;
    border-top: 1px solid #c4c4c4;
    border-bottom: 2px solid #c3b3a9;
}

.coords {
    display: flex;
    gap: 20px;
    flex: 1;
}

.zoom {
    display: flex;
    align-items: center;
    gap: 14px;
    margin-left: 34px;
    padding: 0 18px 0 33px;
    border-left: 1px solid #c4c4c4;
}

.zoom input {
    appearance: none;
    width: 132px;
    height: 24px;
    margin: 0;
    background: linear-gradient(#aaa, #aaa) center / 100% 1px no-repeat;
}

.zoom input::-webkit-slider-thumb {
    appearance: none;
    width: 7px;
    height: 24px;
    border: 1px solid #999;
    background-color: #f9f9f9;
}

.keys {
    display: flex;
    gap: 23px;
    color: #aaa;
}
```
